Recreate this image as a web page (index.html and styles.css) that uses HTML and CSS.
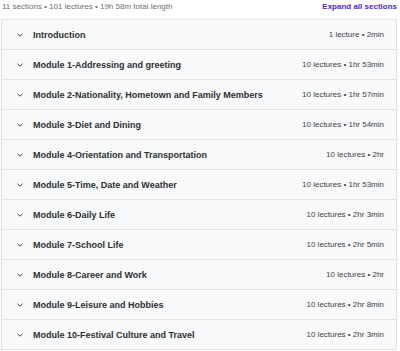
FILE: index.html
```html
<!DOCTYPE html>
<html>
<head>
<meta charset="utf-8">
<link rel="stylesheet" href="styles.css">
</head>
<body>
<div class="wrap">
  <div class="header">
    <span class="summary">11 sections • 101 lectures • 19h 58m total length</span>
    <span class="expand">Expand all sections</span>
  </div>
  <div class="sections">
    <div class="row"><span class="chev"><svg width="6" height="4" viewBox="0 0 6 4"><path d="M0.5 0.8l2.5 2.4 2.5-2.4" fill="none" stroke="#2d2f31" stroke-width="0.9"/></svg></span><span class="title">Introduction</span><span class="meta">1 lecture • 2min</span></div>
    <div class="row"><span class="chev"><svg width="6" height="4" viewBox="0 0 6 4"><path d="M0.5 0.8l2.5 2.4 2.5-2.4" fill="none" stroke="#2d2f31" stroke-width="0.9"/></svg></span><span class="title">Module 1-Addressing and greeting</span><span class="meta">10 lectures • 1hr 53min</span></div>
    <div class="row"><span class="chev"><svg width="6" height="4" viewBox="0 0 6 4"><path d="M0.5 0.8l2.5 2.4 2.5-2.4" fill="none" stroke="#2d2f31" stroke-width="0.9"/></svg></span><span class="title">Module 2-Nationality, Hometown and Family Members</span><span class="meta">10 lectures • 1hr 57min</span></div>
    <div class="row"><span class="chev"><svg width="6" height="4" viewBox="0 0 6 4"><path d="M0.5 0.8l2.5 2.4 2.5-2.4" fill="none" stroke="#2d2f31" stroke-width="0.9"/></svg></span><span class="title">Module 3-Diet and Dining</span><span class="meta">10 lectures • 1hr 54min</span></div>
    <div class="row"><span class="chev"><svg width="6" height="4" viewBox="0 0 6 4"><path d="M0.5 0.8l2.5 2.4 2.5-2.4" fill="none" stroke="#2d2f31" stroke-width="0.9"/></svg></span><span class="title">Module 4-Orientation and Transportation</span><span class="meta">10 lectures • 2hr</span></div>
    <div class="row"><span class="chev"><svg width="6" height="4" viewBox="0 0 6 4"><path d="M0.5 0.8l2.5 2.4 2.5-2.4" fill="none" stroke="#2d2f31" stroke-width="0.9"/></svg></span><span class="title">Module 5-Time, Date and Weather</span><span class="meta">10 lectures • 1hr 53min</span></div>
    <div class="row"><span class="chev"><svg width="6" height="4" viewBox="0 0 6 4"><path d="M0.5 0.8l2.5 2.4 2.5-2.4" fill="none" stroke="#2d2f31" stroke-width="0.9"/></svg></span><span class="title">Module 6-Daily Life</span><span class="meta">10 lectures • 2hr 3min</span></div>
    <div class="row"><span class="chev"><svg width="6" height="4" viewBox="0 0 6 4"><path d="M0.5 0.8l2.5 2.4 2.5-2.4" fill="none" stroke="#2d2f31" stroke-width="0.9"/></svg></span><span class="title">Module 7-School Life</span><span class="meta">10 lectures • 2hr 5min</span></div>
    <div class="row"><span class="chev"><svg width="6" height="4" viewBox="0 0 6 4"><path d="M0.5 0.8l2.5 2.4 2.5-2.4" fill="none" stroke="#2d2f31" stroke-width="0.9"/></svg></span><span class="title">Module 8-Career and Work</span><span class="meta">10 lectures • 2hr</span></div>
    <div class="row"><span class="chev"><svg width="6" height="4" viewBox="0 0 6 4"><path d="M0.5 0.8l2.5 2.4 2.5-2.4" fill="none" stroke="#2d2f31" stroke-width="0.9"/></svg></span><span class="title">Module 9-Leisure and Hobbies</span><span class="meta">10 lectures • 2hr 8min</span></div>
    <div class="row"><span class="chev"><svg width="6" height="4" viewBox="0 0 6 4"><path d="M0.5 0.8l2.5 2.4 2.5-2.4" fill="none" stroke="#2d2f31" stroke-width="0.9"/></svg></span><span class="title">Module 10-Festival Culture and Travel</span><span class="meta">10 lectures • 2hr 3min</span></div>
  </div>
</div>
</body>
</html>
```
FILE: styles.css
```css
html, body {
  margin: 0;
  padding: 0;
  background: #ffffff;
  font-family: "Liberation Sans", Arial, sans-serif;
  color: #2d2f31;
}
.wrap {
  padding: 0 3px 0 1px;
}
.header {
  display: flex;
  justify-content: space-between;
  align-items: flex-start;
  height: 19px;
  padding-left: 1px;
  line-height: 14px;
}
.summary {
  font-size: 8px;
  color: #6a6f73;
}
.expand {
  font-size: 8px;
  font-weight: bold;
  color: #5624d0;
}
.sections {
  border: 1px solid #dfe3e6;
  border-bottom: none;
}
.row {
  display: flex;
  align-items: center;
  height: 29px;
  border-bottom: 1px solid #dfe3e6;
  background: #f7f9fa;
  padding: 0 12px 0 15px;
}
.chev {
  width: 6px;
  height: 4px;
  display: flex;
  margin-right: 10px;
}
.title {
  flex: 1;
  font-size: 9px;
  font-weight: bold;
  color: #2d2f31;
}
.meta {
  font-size: 8px;
  color: #3e4143;
}
```
